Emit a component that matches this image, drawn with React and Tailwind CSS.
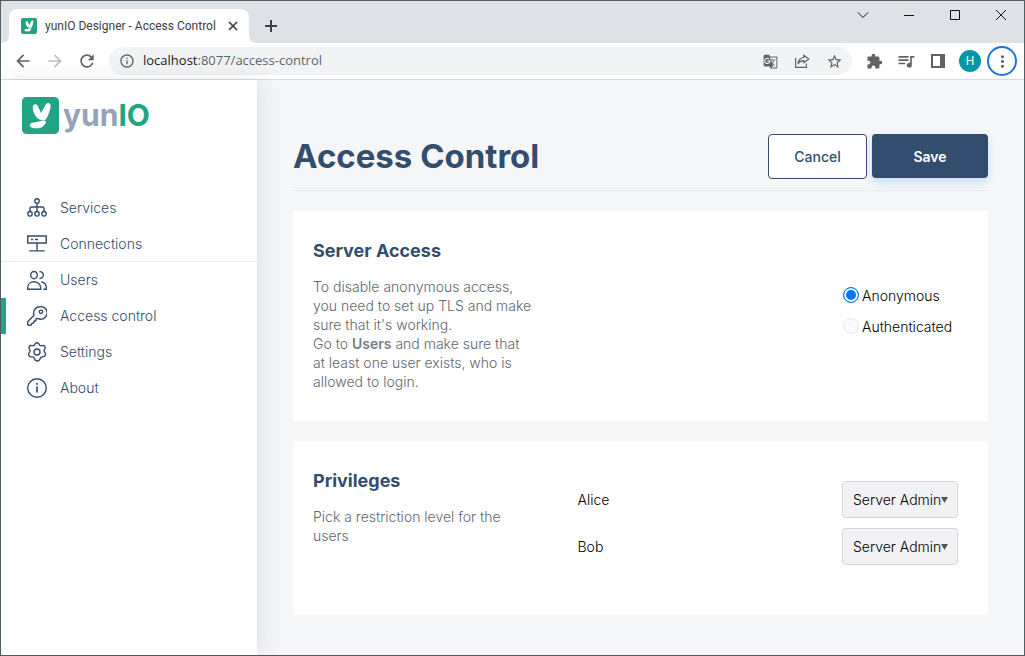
import React, { useState } from "react";
import {
  MdArrowBack,
  MdArrowForward,
  MdRefresh,
  MdInfoOutline,
  MdStarBorder,
  MdExtension,
  MdQueueMusic,
  MdMoreVert,
  MdGTranslate,
} from "react-icons/md";

function LogoMark({ className }) {
  return (
    <svg viewBox="0 0 37 37" className={className} aria-hidden="true">
      <rect width="37" height="37" rx="4.5" fill="#22a484" />
      <g fill="#fff">
        <path d="M10.8 9.8C11.2 7 14.6 6.2 15.8 9L19 16L23.4 8C24.8 4.8 28.8 5.4 28.6 9C28.4 12.8 26.4 18.4 24.2 22C23 24 19.6 23.4 17 22.2C13.6 20.8 10.2 14 10.8 9.8Z" />
        <path d="M7.8 28.4C7.6 26.2 9.6 25.4 12 25.4C15.6 25.4 18.6 23.4 22.8 23.6C25.4 24.4 22.6 29 19.2 30.4C15.6 32 8 31.4 7.8 28.4Z" />
      </g>
    </svg>
  );
}

function NavIcon({ children }) {
  return (
    <svg viewBox="0 0 20 20" className="size-5 shrink-0" fill="none" stroke="#324d6e" strokeWidth="1.4" aria-hidden="true">
      {children}
    </svg>
  );
}

const icons = {
  services: (
    <NavIcon>
      <circle cx="10" cy="2.9" r="2.2" />
      <path d="M10 5.1V13.4M3 13.4V10.6Q3 9 4.6 9H15.4Q17 9 17 10.6V13.4" />
      <ellipse cx="3" cy="15.8" rx="2.2" ry="2.3" />
      <ellipse cx="10" cy="15.8" rx="2.2" ry="2.3" />
      <ellipse cx="17" cy="15.8" rx="2.2" ry="2.3" />
    </NavIcon>
  ),
  connections: (
    <NavIcon>
      <path d="M.7 2H19.3V9H.7ZM10 9V16.6M2.3 16.9H17.7" />
      <path d="M4 5.5H6M8 5.5H11" strokeWidth="1.7" />
    </NavIcon>
  ),
  users: (
    <NavIcon>
      <ellipse cx="7" cy="5.1" rx="3.3" ry="3.6" />
      <path d="M.7 19.3V17.8C.7 14.1 3.4 11.8 7 11.8S13.7 14.1 13.7 17.8V19.3Z" />
      <path d="M12.4 1.7C17.6 1 17.6 9.2 12.4 8.4M14.4 11.8C17.4 12.6 19.3 14.8 19.3 17.6V19.3H16.4" />
    </NavIcon>
  ),
  key: (
    <NavIcon>
      <path d="M12.9.7A6.4 6.4 0 0 0 7 9.3L1.2 15.2Q.7 15.8.7 16.6V18.2Q.7 19.3 1.8 19.3H3.2Q4.7 19.3 4.9 17.4L6.6 17L7 15.2L8.8 14.8L9.1 12.8L10.7 12.4A6.3 6.3 0 1 0 12.9.7Z" strokeLinejoin="round" />
      <circle cx="14" cy="5.8" r="1.7" />
    </NavIcon>
  ),
  settings: (
    <NavIcon>
      <path
        d="M8.3 1.7Q10-.1 11.7 1.7L12.7 3.2Q13.5 3.9 14.5 3.6L16.3 3.5Q18.3 4.1 18.1 6.2L17.3 8Q16.9 9.1 17.6 10L18.4 11.3Q19 13.4 17.2 14.4L15.4 14.7Q14.2 14.7 13.5 15.9L12.4 18.1Q10.4 20.1 8.2 18.1L7.1 15.9Q6.5 14.7 5.2 14.9L3.3 14.7Q1.2 13.8 1.7 11.5L2.7 9.9Q3.3 9 2.9 8L2 6.2Q1.7 4 3.7 3.5L5.6 3.6Q6.6 3.9 7.3 3.2Z"
        strokeLinejoin="round"
      />
      <circle cx="10" cy="10" r="3" />
    </NavIcon>
  ),
  about: (
    <NavIcon>
      <circle cx="10" cy="10" r="9.3" />
      <path d="M10 8.4V14.6M10 5V6.7" strokeWidth="1.7" />
    </NavIcon>
  ),
};

function WindowButton({ label, children }) {
  return (
    <button aria-label={label} className="flex h-7 w-[46px] items-center justify-center">
      <svg viewBox="0 0 12 12" className="size-3" fill="none" stroke="#111" aria-hidden="true">
        {children}
      </svg>
    </button>
  );
}

function TabStrip() {
  return (
    <div className="flex h-[42px] bg-[#dee1e6]">
      <div className="flex min-w-0 flex-1 items-end">
        <svg viewBox="0 0 8 8" className="size-2 shrink-0" aria-hidden="true">
          <path d="M8 0V8H0Q8 8 8 0Z" fill="#fff" />
        </svg>
        <div className="flex h-[34px] w-60 items-center rounded-t-lg bg-white pr-2 pl-3">
          <LogoMark className="size-4 shrink-0" />
          <span className="ml-2 flex-1 font-['Roboto',sans-serif] text-[12px] whitespace-nowrap text-[#3c4043]">
            yunIO Designer - Access Control
          </span>
          <button aria-label="Close tab" className="flex size-4 items-center justify-center">
            <svg viewBox="0 0 10 10" className="size-[10px]" stroke="#3c4043" strokeWidth="1.7" aria-hidden="true">
              <path d="M1 1L9 9M9 1L1 9" />
            </svg>
          </button>
        </div>
        <svg viewBox="0 0 8 8" className="size-2 shrink-0" aria-hidden="true">
          <path d="M0 0V8H8Q0 8 0 0Z" fill="#fff" />
        </svg>
        <button aria-label="New tab" className="flex h-[34px] w-7 items-center justify-center">
          <svg viewBox="0 0 12 12" className="size-3" stroke="#3c4043" strokeWidth="2" aria-hidden="true">
            <path d="M6 0V12M0 6H12" />
          </svg>
        </button>
      </div>
      <div className="flex">
        <WindowButton label="Search tabs">
          <path d="M1 3.5L6 8.5L11 3.5" />
        </WindowButton>
        <WindowButton label="Minimize">
          <path d="M1 6.5H11" />
        </WindowButton>
        <WindowButton label="Maximize">
          <path d="M1.5 1.5H10.5V10.5H1.5Z" />
        </WindowButton>
        <WindowButton label="Close">
          <path d="M1 1L11 11M11 1L1 11" />
        </WindowButton>
      </div>
    </div>
  );
}

function BarButton({ label, children }) {
  return (
    <button aria-label={label} className="flex size-8 shrink-0 items-center justify-center text-[#5f6368]">
      {children}
    </button>
  );
}

function Toolbar() {
  return (
    <div className="flex h-[37px] items-center border-b border-[#d9dbde] bg-white pr-[7px] pl-[6px]">
      <BarButton label="Back">
        <MdArrowBack size={20} />
      </BarButton>
      <BarButton label="Forward">
        <MdArrowForward size={20} color="#bbbdbf" />
      </BarButton>
      <BarButton label="Reload">
        <MdRefresh size={20} />
      </BarButton>
      <div className="ml-[6px] flex h-7 flex-1 items-center rounded-full bg-[#f1f3f4] pr-[2px] pl-[10px]">
        <MdInfoOutline size={16} color="#5f6368" className="shrink-0" />
        <span className="ml-2 flex-1 font-['Open_Sans',sans-serif] text-[13px] text-[#5f6368]">
          <span className="text-[#202124]">localhost</span>:8077/access-control
        </span>
        <BarButton label="Translate">
          <MdGTranslate size={15} />
        </BarButton>
        <BarButton label="Share">
          <svg viewBox="0 0 16 16" className="size-4" fill="none" stroke="#5f6368" strokeWidth="1.2" aria-hidden="true">
            <path d="M1.6 5V14.4H12.4V10.5" />
            <path d="M9.8 2.2L14.8 6L9.8 9.8V7.6C7.2 7.6 5.4 8.4 4 10.6C4.4 7.2 6.4 5 9.8 4.5Z" strokeLinejoin="round" />
          </svg>
        </BarButton>
        <BarButton label="Bookmark">
          <MdStarBorder size={17} />
        </BarButton>
      </div>
      <div className="ml-[6px] flex items-center">
        <BarButton label="Extensions">
          <MdExtension size={17} />
        </BarButton>
        <BarButton label="Media">
          <MdQueueMusic size={20} />
        </BarButton>
        <BarButton label="Side panel">
          <svg viewBox="0 0 14 14" className="size-[14px]" aria-hidden="true">
            <path d="M0 0H14V14H0ZM2 2V12H9V2Z" fill="#5f6368" fillRule="evenodd" />
          </svg>
        </BarButton>
        <BarButton label="Profile">
          <span className="flex size-[22px] items-center justify-center rounded-full bg-[#0097a7] font-['Roboto',sans-serif] text-[12px] text-white">
            H
          </span>
        </BarButton>
        <button
          aria-label="Menu"
          className="ml-px flex size-[30px] items-center justify-center rounded-full border-2 border-[#1a73e8] text-[#5f6368]"
        >
          <MdMoreVert size={19} />
        </button>
      </div>
    </div>
  );
}

const navItems = [
  { label: "Services", icon: icons.services },
  { label: "Connections", icon: icons.connections, divider: true },
  { label: "Users", icon: icons.users },
  { label: "Access control", icon: icons.key, active: true },
  { label: "Settings", icon: icons.settings },
  { label: "About", icon: icons.about },
];

function Sidebar() {
  return (
    <aside className="z-10 w-64 shrink-0 bg-white shadow-[4px_0_20px_rgba(40,50,70,0.10)]">
      <a href="#" aria-label="yunIO" className="ml-[21px] mt-[17px] flex h-[37px] items-start gap-1">
        <LogoMark className="size-[37px]" />
        <span className="font-['Inter',sans-serif] text-[30px] leading-9 font-bold text-[#94a3bc]">
          yun<span className="text-[#22a484]">IO</span>
        </span>
      </a>
      <nav className="mt-14">
        {navItems.map((item) => (
          <a
            key={item.label}
            href="#"
            aria-current={item.active ? "page" : undefined}
            className={
              "flex h-9 items-center gap-[13px] text-[14px] font-light text-[#324d6e] " +
              (item.active ? "border-l-5 border-[#22a484] pl-[21px]" : "pl-[26px]") +
              (item.divider ? " border-b border-[#e9ebee]" : " pb-px")
            }
          >
            {item.icon}
            {item.label}
          </a>
        ))}
      </nav>
    </aside>
  );
}

function Card({ title, text, children }) {
  return (
    <section className="mt-5 grid grid-cols-[1fr_1fr_116px] bg-white py-[30px] pr-[30px] pl-5">
      <div className="pr-[43px]">
        <h2 className="text-[18px] leading-5 font-bold text-[#324d6e]">{title}</h2>
        <p className="mt-4 text-[14px] leading-[19px] font-light text-[#62676e]">{text}</p>
      </div>
      {children}
    </section>
  );
}

function AccessOption({ id, label, checked, onChange }) {
  return (
    <div className="flex h-5 items-center gap-[3px] pl-px">
      <input
        type="radio"
        name="access"
        id={id}
        checked={checked}
        onChange={onChange}
        className="size-4 shrink-0 appearance-none rounded-full border border-[#e8e8e8] bg-[#fbfbfb] checked:border-[#0075ff] checked:bg-[#0075ff] checked:shadow-[inset_0_0_0_2px_#fff]"
      />
      <label htmlFor={id} className="text-[14px] font-light text-black">
        {label}
      </label>
    </div>
  );
}

function PrivilegeRow({ name }) {
  const id = "role-" + name;
  return (
    <div className="flex h-[37px] items-center justify-between">
      <label htmlFor={id} className="text-[14px] font-light text-black">
        {name}
      </label>
      <div className="relative w-[116px]">
        <select
          id={id}
          className="h-[37px] w-full appearance-none rounded border border-[#d2d5de] bg-[#f2f2f5] pl-[10px] text-[14px] font-light text-black"
        >
          <option>Server Admin</option>
          <option>Reader</option>
        </select>
        <svg viewBox="0 0 7 6" className="pointer-events-none absolute top-4 right-[10px] h-[6px] w-[7px]" aria-hidden="true">
          <path d="M0 0H7L3.5 6Z" fill="#555" />
        </svg>
      </div>
    </div>
  );
}

export default function App() {
  const [access, setAccess] = useState("anonymous");
  return (
    <div className="flex min-h-screen flex-col border border-[#4c6060] font-['Inter',sans-serif]">
      <TabStrip />
      <Toolbar />
      <div className="flex flex-1">
        <Sidebar />
        <main className="min-w-0 flex-1 bg-[#f5f6f8] px-9 pt-[54px] pb-10">
          <header className="flex items-start justify-between border-b border-[#e9ebee] pb-[11px]">
            <h1 className="text-[33px] leading-[45px] font-bold text-[#324d6e]">Access Control</h1>
            <div className="flex items-start gap-[5px]">
              <button className="h-[45px] w-[99px] rounded border border-[#324d6e] bg-white text-[14px] font-medium text-[#324d6e]">
                Cancel
              </button>
              <button className="h-11 w-[116px] rounded bg-[#324d6e] text-[14px] font-semibold text-white shadow-[0_4px_10px_rgba(120,190,240,0.4)]">
                Save
              </button>
            </div>
          </header>

          <Card
            title="Server Access"
            text={
              <>
                To disable anonymous access, you need to set up TLS and make sure that it's working.
                <br />
                Go to <b className="font-semibold text-[#777c83]">Users</b> and make sure that at least one user exists,
                who is allowed to login.
              </>
            }
          >
            <div className="col-start-3 flex flex-col gap-[11px] pt-11">
              <AccessOption
                id="anonymous"
                label="Anonymous"
                checked={access === "anonymous"}
                onChange={() => setAccess("anonymous")}
              />
              <AccessOption
                id="authenticated"
                label="Authenticated"
                checked={access === "authenticated"}
                onChange={() => setAccess("authenticated")}
              />
            </div>
          </Card>

          <Card title="Privileges" text="Pick a restriction level for the users">
            <div className="col-span-2 flex flex-col gap-[10px] pt-[10px] pb-5">
              <PrivilegeRow name="Alice" />
              <PrivilegeRow name="Bob" />
            </div>
          </Card>
        </main>
      </div>
    </div>
  );
}
